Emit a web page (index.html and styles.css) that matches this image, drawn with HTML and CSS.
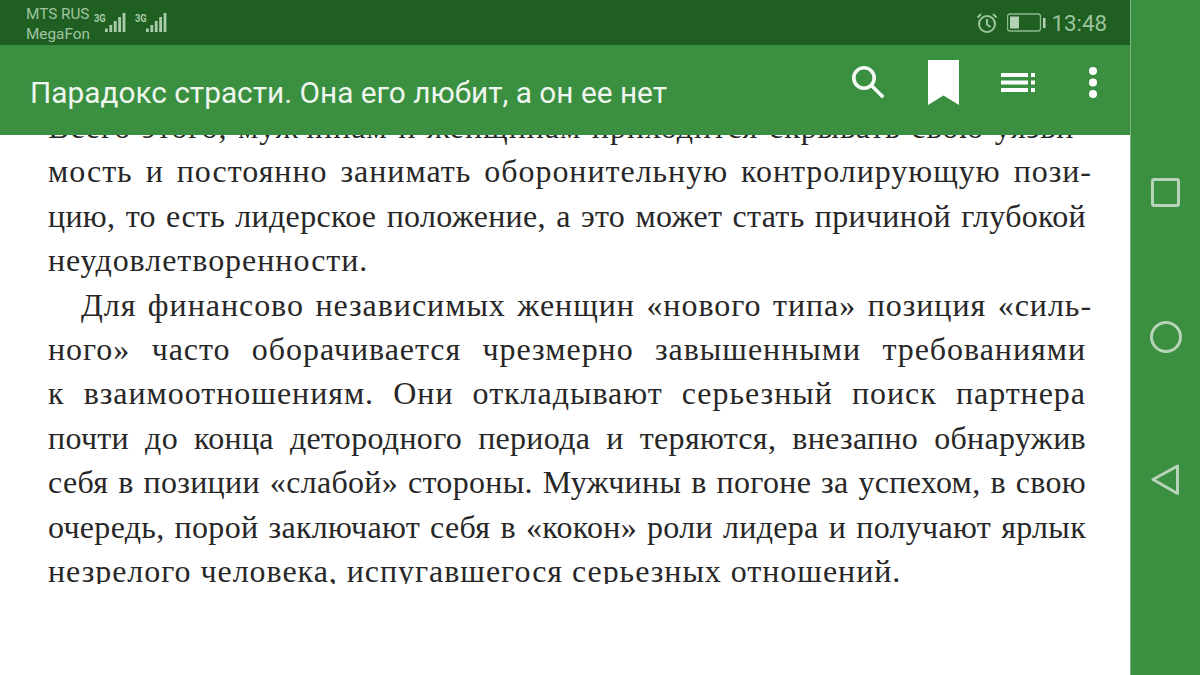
FILE: index.html
```html
<!DOCTYPE html>
<html lang="ru">
<head>
<meta charset="utf-8">
<title>Reader</title>
<link rel="stylesheet" href="styles.css">
</head>
<body>
<div class="screen">
  <div class="main">
    <header class="status">
      <div class="carriers">
        <div>MTS RUS</div>
        <div>MegaFon</div>
      </div>
      <div class="signal">
        <span class="net">3G</span>
        <svg width="22" height="22" viewBox="0 0 22 22"><g fill="#a9cdaa"><rect x="0" y="17.500" width="2.800" height="3.500"/><rect x="4.400" y="14" width="2.800" height="7"/><rect x="8.800" y="10" width="2.800" height="11"/><rect x="13.200" y="6" width="2.800" height="15"/><rect x="17.600" y="2" width="2.800" height="19"/></g></svg>
      </div>
      <div class="signal">
        <span class="net">3G</span>
        <svg width="22" height="22" viewBox="0 0 22 22"><g fill="#a9cdaa"><rect x="0" y="17.500" width="2.800" height="3.500"/><rect x="4.400" y="14" width="2.800" height="7"/><rect x="8.800" y="10" width="2.800" height="11"/><rect x="13.200" y="6" width="2.800" height="15"/><rect x="17.600" y="2" width="2.800" height="19"/></g></svg>
      </div>
      <div class="status-right">
        <svg width="24" height="24" viewBox="0 0 24 24" fill="none" stroke="#9cc39e" stroke-width="2"><circle cx="12" cy="13" r="8"/><path d="M12 8v5.500l3.500 2.500M2.500 6.500 6 3M21.500 6.500 18 3"/></svg>
        <svg class="battery" width="39" height="20" viewBox="0 0 39 20"><rect x="0.500" y="1" width="33" height="17" rx="2.500" fill="none" stroke="#8fbb92" stroke-width="1.300"/><rect x="3" y="3.500" width="9" height="12" fill="#b4d0b5"/><rect x="36" y="5" width="2.500" height="10" fill="#b4d0b5"/></svg>
        <span class="time">13:48</span>
      </div>
    </header>
    <div class="appbar">
      <h1 class="title">Парадокс страсти. Она его любит, а он ее нет</h1>
      <div class="actions">
        <svg class="a-search" width="36" height="38" viewBox="0 0 36 38" fill="none" stroke="#f5faf5" stroke-width="3.600"><circle cx="12" cy="12" r="10.200"/><path d="M20 20 30 30" stroke-linecap="square"/></svg>
        <svg class="a-mark" width="31" height="45" viewBox="0 0 31 45"><path d="M0 0h31v45L15.500 35.500 0 45z" fill="#fff"/></svg>
        <svg class="a-list" width="34" height="19" viewBox="0 0 34 19"><g fill="#fff"><rect width="27" height="4"/><rect y="7.500" width="27" height="4"/><rect y="15" width="27" height="4"/><rect x="30" width="4" height="4"/><rect x="30" y="7.500" width="4" height="4"/><rect x="30" y="15" width="4" height="4"/></g></svg>
        <svg class="a-more" width="8" height="31" viewBox="0 0 8 31"><g fill="#fff"><circle cx="4" cy="4" r="4"/><circle cx="4" cy="15.500" r="4"/><circle cx="4" cy="27" r="4"/></g></svg>
      </div>
    </div>
    <main class="page">
      <div class="book">
        <div class="line">Всего этого, мужчинам и женщинам приходится скрывать свою уязви-</div>
        <div class="line hang">мость и постоянно занимать оборонительную контролирующую пози-</div>
        <div class="line tight">цию, то есть лидерское положение, а это может стать причиной глубокой</div>
        <div class="line end">неудовлетворенности.</div>
        <div class="line hang indent">Для финансово независимых женщин «нового типа» позиция «силь-</div>
        <div class="line">ного» часто оборачивается чрезмерно завышенными требованиями</div>
        <div class="line">к взаимоотношениям. Они откладывают серьезный поиск партнера</div>
        <div class="line tight">почти до конца детородного периода и теряются, внезапно обнаружив</div>
        <div class="line tight">себя в позиции «слабой» стороны. Мужчины в погоне за успехом, в свою</div>
        <div class="line tight">очередь, порой заключают себя в «кокон» роли лидера и получают ярлык</div>
        <div class="line end">незрелого человека, испугавшегося серьезных отношений.</div>
      </div>
    </main>
  </div>
  <nav class="navbar">
    <svg width="30" height="30" viewBox="0 0 30 30" fill="none" stroke="#b7d3b8" stroke-width="3" stroke-linejoin="round"><rect x="1.500" y="2.500" width="26" height="26" rx="1.500"/></svg>
    <svg width="32" height="32" viewBox="0 0 32 32" fill="none" stroke="#b7d3b8" stroke-width="3"><circle cx="16" cy="16" r="14.500"/></svg>
    <svg class="nav-back" width="30" height="32" viewBox="0 0 30 32" fill="none" stroke="#b7d3b8" stroke-width="3" stroke-linejoin="round"><path d="M2 15.500 26.500 2v27.500z"/></svg>
  </nav>
</div>
</body>
</html>
```
FILE: styles.css
```css
* { box-sizing: border-box; }
html, body { margin: 0; padding: 0; }
body { width: 1200px; height: 675px; overflow: hidden; background: #fff; }
.screen { display: flex; width: 1200px; height: 675px; }
.main { width: 1130px; display: flex; flex-direction: column; }
.status {
  height: 45px; background: #1f5f21; display: flex; align-items: flex-start;
  padding: 0 23px 0 26px; font-family: Roboto, sans-serif; color: #a0c5a2;
}
.carriers { font-size: 15.300px; line-height: 20px; padding-top: 4px; width: 68px; }
.signal { display: flex; align-items: flex-start; margin-right: 8px; padding-top: 11px; }
.net { font-size: 11px; font-weight: 700; line-height: 11px; margin-top: 2px; color: #a9cdaa; width: 11px; transform: scaleX(0.85); transform-origin: left center; }
.status-right { margin-left: auto; display: flex; align-items: center; height: 45px; padding-top: 1px; }
.battery { margin-left: 8px; }
.time { font-size: 22.300px; margin-left: 5px; color: #9cc39e; }
.appbar {
  height: 90px; background: #3a8f40; display: flex; align-items: center;
  padding: 0 0 0 30px; position: relative; z-index: 1;
}
.title { margin: 4px 0 0; font: 400 29.800px Roboto, sans-serif; color: #eef6ee; white-space: nowrap; }
.actions { margin-left: auto; display: flex; align-items: flex-start; height: 90px; padding-right: 33px; }
.a-search { margin-top: 21px; margin-right: 40px; }
.a-mark { margin-top: 15px; margin-right: 42px; }
.a-list { margin-top: 28px; margin-right: 54px; }
.a-more { margin-top: 22px; }
.page { flex: 1; min-height: 0; overflow: hidden; padding-left: 48px; }
.book {
  height: 479px; margin-top: -30px; overflow: hidden; width: 1050px;
  font-family: "Liberation Serif", serif; font-size: 32px; letter-spacing: 0.960px; line-height: 44.400px; color: #272727;
}
.line { text-align: justify; text-align-last: justify; width: 1038px; }
.line.hang { width: 1044px; }
.line.tight { word-spacing: -4px; letter-spacing: 0.300px; }
.line.end { text-align-last: left; }
.line.indent { padding-left: 33px; }
.navbar {
  width: 70px; background: #3a8f40; border-left: 1px solid #7fb383;
  display: flex; flex-direction: column; align-items: center; padding-top: 177px; gap: 114px;
}
.nav-back { margin-top: -3px; }
```
